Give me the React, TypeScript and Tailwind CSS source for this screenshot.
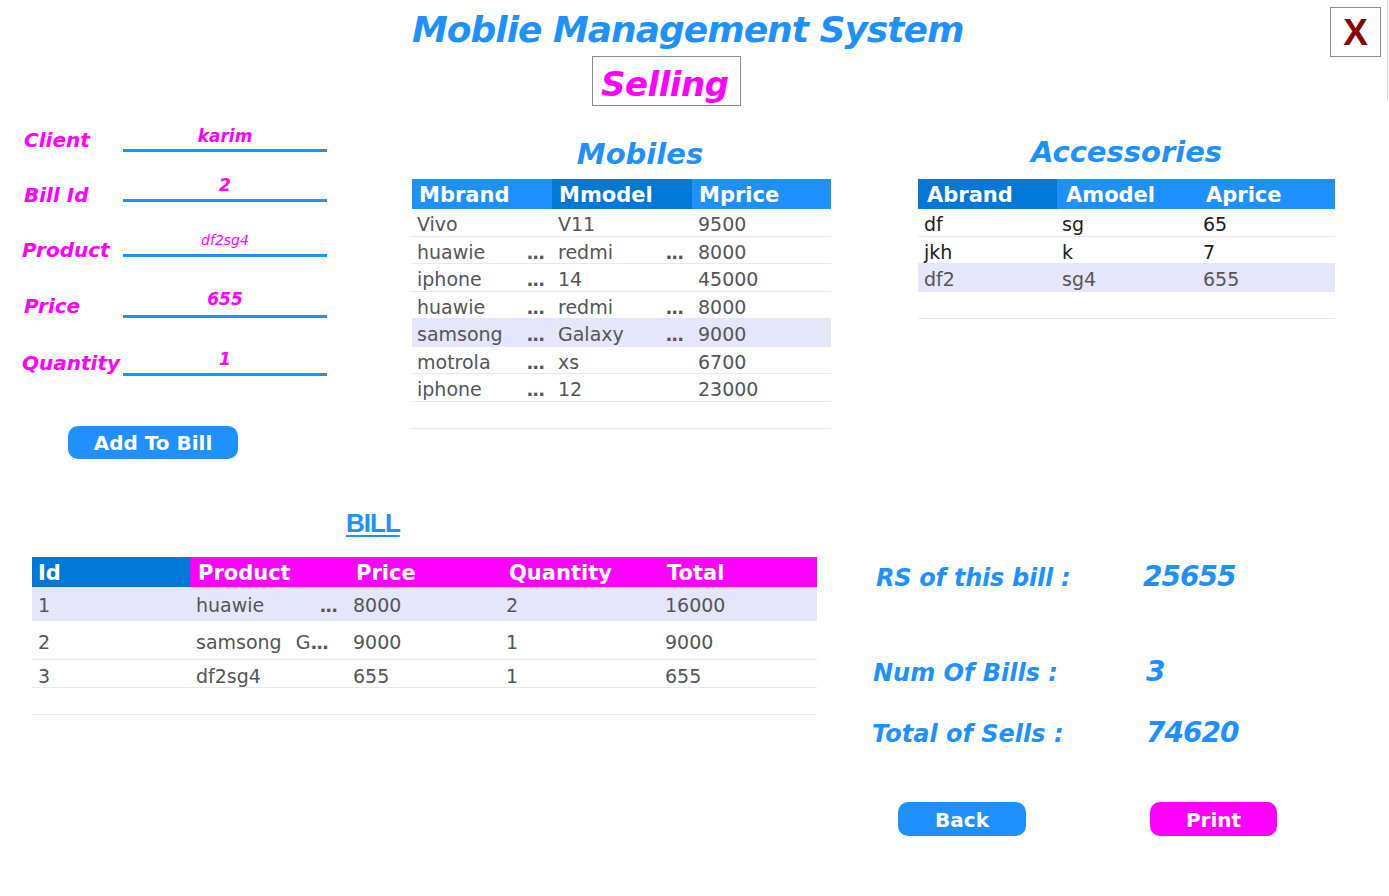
import React from "react";

const fields = [
  { label: "Client", value: "karim", row: "h-[42px]", lab: "pl-[24px] mb-[2px]", val: "text-[17px] font-bold pb-[4px]" },
  { label: "Bill Id", value: "2", row: "h-[50px]", lab: "pl-[24px] mb-[-3px]", val: "text-[17px] font-bold pb-[5px]" },
  { label: "Product", value: "df2sg4", row: "h-[55px]", lab: "pl-[22px] mb-[-3px]", val: "text-[14px] font-normal pb-[7px]" },
  { label: "Price", value: "655", row: "h-[61px]", lab: "pl-[24px] mb-[2px]", val: "text-[17px] font-bold pb-[7px]" },
  { label: "Quantity", value: "1", row: "h-[58px]", lab: "pl-[22px] mb-[3px]", val: "text-[17px] font-bold pb-[5px]" },
];

const mobiles: { b: string; bd: boolean; m: string; md: boolean; p: string; sel?: boolean }[] = [
  { b: "Vivo", bd: false, m: "V11", md: false, p: "9500" },
  { b: "huawie", bd: true, m: "redmi", md: true, p: "8000" },
  { b: "iphone", bd: true, m: "14", md: false, p: "45000" },
  { b: "huawie", bd: true, m: "redmi", md: true, p: "8000" },
  { b: "samsong", bd: true, m: "Galaxy", md: true, p: "9000", sel: true },
  { b: "motrola", bd: true, m: "xs", md: false, p: "6700" },
  { b: "iphone", bd: true, m: "12", md: false, p: "23000" },
];

const accessories = [
  { b: "df", m: "sg", p: "65", sel: false },
  { b: "jkh", m: "k", p: "7", sel: false },
  { b: "df2", m: "sg4", p: "655", sel: true },
];

function Dots() {
  return <span className="text-[18px] leading-none tracking-[-1px] font-bold">...</span>;
}

function Header() {
  return (
    <div className="flex h-[110px]">
      <div className="flex flex-col ml-[412px]">
        <h1 className="mt-[12px] text-[36px] leading-none font-bold italic tracking-[-1px] text-[#1E90FF] whitespace-nowrap">
          Moblie Management System
        </h1>
        <div className="mt-[8px] ml-[180px] w-[149px] h-[50px] border border-[#8a8a8a] pl-[8px] pt-[10px]">
          <span className="block text-[34px] leading-none font-bold italic text-[#FF00FF] tracking-[-0.5px]">Selling</span>
        </div>
      </div>
      <div className="ml-auto mt-[7px] w-[51px] h-[50px] border border-[#8a8a8a] flex items-center justify-center font-['Liberation_Sans',Arial,sans-serif] font-bold text-[37px] leading-none text-[#8B0000]">
        X
      </div>
      <div className="ml-[6px] mr-[1px] w-px h-[100px] bg-[#d4d4d4]" />
    </div>
  );
}

function Form() {
  return (
    <div className="w-[412px] shrink-0 flex flex-col">
      {fields.map((f) => (
        <div key={f.label} className={`flex items-end ${f.row}`}>
          <div className={`w-[123px] shrink-0 whitespace-nowrap text-[20px] leading-none font-bold italic text-[#FF00FF] ${f.lab}`}>
            {f.label}
          </div>
          <div className={`w-[204px] border-b-[3px] border-[#1E90FF] text-center leading-none italic text-[#FF00FF] ${f.val}`}>
            {f.value}
          </div>
        </div>
      ))}
      <div className="mt-[50px] ml-[68px] w-[170px] h-[33px] rounded-[10px] bg-[#1E90FF] text-white font-bold text-[20px] leading-none flex items-center justify-center pt-[1px]">
        Add To Bill
      </div>
    </div>
  );
}

function Mobiles() {
  return (
    <div className="w-[419px] shrink-0 flex flex-col">
      <div className="mt-[30px] pl-[37px] text-center text-[29px] leading-none font-bold italic text-[#1E90FF]">Mobiles</div>
      <div className="mt-[10px] flex flex-col">
        <div className="flex h-[30px] text-white font-bold text-[21px] leading-none">
          <div className="w-[140px] bg-[#1E90FF] pl-[7px] pt-[6px]">Mbrand</div>
          <div className="w-[140px] bg-[#0078D7] pl-[7px] pt-[6px]">Mmodel</div>
          <div className="w-[139px] bg-[#1E90FF] pl-[7px] pt-[6px]">Mprice</div>
        </div>
        {mobiles.map((r, i) => (
          <div
            key={i}
            className={`flex h-[27.5px] border-b border-[#e6e6f5] text-[19px] leading-none text-[#555] ${r.sel ? "bg-[#E6E6FA]" : "bg-white"}`}
          >
            <div className="w-[140px] pl-[5px] pr-[8px] pt-[6px] flex items-baseline justify-between">
              <span>{r.b}</span>
              {r.bd ? <Dots /> : null}
            </div>
            <div className="w-[140px] pl-[6px] pr-[9px] pt-[6px] flex items-baseline justify-between">
              <span>{r.m}</span>
              {r.md ? <Dots /> : null}
            </div>
            <div className="w-[139px] pl-[6px] pt-[6px]">{r.p}</div>
          </div>
        ))}
        <div className="h-[27.5px] border-b border-[#e6e6f5]" />
      </div>
    </div>
  );
}

function Accessories() {
  return (
    <div className="ml-[87px] w-[417px] shrink-0 flex flex-col">
      <div className="mt-[28px] text-center text-[29px] leading-none font-bold italic text-[#1E90FF]">Accessories</div>
      <div className="mt-[12px] flex flex-col">
        <div className="flex h-[30px] text-white font-bold text-[21px] leading-none">
          <div className="w-[139px] bg-[#0078D7] pl-[9px] pt-[6px]">Abrand</div>
          <div className="w-[139px] bg-[#1E90FF] pl-[9px] pt-[6px]">Amodel</div>
          <div className="w-[139px] bg-[#1E90FF] pl-[10px] pt-[6px]">Aprice</div>
        </div>
        {accessories.map((r, i) => (
          <div
            key={i}
            className={`flex h-[27.5px] border-b border-[#e6e6f5] text-[19px] leading-none ${r.sel ? "bg-[#E6E6FA] text-[#555]" : "bg-white text-[#1c1c1c]"}`}
          >
            <div className="w-[139px] pl-[6px] pt-[6px]">{r.b}</div>
            <div className="w-[139px] pl-[5px] pt-[6px]">{r.m}</div>
            <div className="w-[139px] pl-[7px] pt-[6px]">{r.p}</div>
          </div>
        ))}
        <div className="h-[27.5px] border-b border-[#e6e6f5]" />
      </div>
    </div>
  );
}

function Bill() {
  return (
    <div className="w-[817px] shrink-0 flex flex-col">
      <div className="mt-[40px] ml-[346px] font-['Liberation_Sans',Arial,sans-serif] text-[26px] leading-none font-bold tracking-[-1px] text-[#1E90FF] underline decoration-2 underline-offset-[3px]">
        BILL
      </div>
      <div className="mt-[21px] ml-[32px] w-[785px] flex flex-col">
        <div className="flex h-[30px] text-white font-bold text-[21px] leading-none">
          <div className="w-[158px] bg-[#0078D7] pl-[6px] pt-[6px]">Id</div>
          <div className="w-[157px] bg-[#FF00FF] pl-[8px] pt-[6px]">Product</div>
          <div className="w-[154px] bg-[#FF00FF] pl-[9px] pt-[6px]">Price</div>
          <div className="w-[158px] bg-[#FF00FF] pl-[8px] pt-[6px]">Quantity</div>
          <div className="w-[158px] bg-[#FF00FF] pl-[8px] pt-[6px]">Total</div>
        </div>
        <div className="flex h-[34px] bg-[#E6E6FA] border-b border-[#e6e6f5] text-[19px] leading-none text-[#555]">
          <div className="w-[158px] pl-[6px] pt-[9px]">1</div>
          <div className="w-[157px] pl-[6px] pr-[10px] pt-[9px] flex items-baseline justify-between">
            <span>huawie</span>
            <Dots />
          </div>
          <div className="w-[154px] pl-[6px] pt-[9px]">8000</div>
          <div className="w-[158px] pl-[5px] pt-[9px]">2</div>
          <div className="w-[158px] pl-[6px] pt-[9px]">16000</div>
        </div>
        <div className="flex h-[39px] border-b border-[#e6e6f5] text-[19px] leading-none text-[#555]">
          <div className="w-[158px] pl-[6px] pt-[12px]">2</div>
          <div className="w-[157px] pl-[6px] pt-[12px] flex items-baseline">
            <span>samsong</span>
            <span className="ml-[14px]">G</span>
            <Dots />
          </div>
          <div className="w-[154px] pl-[6px] pt-[12px]">9000</div>
          <div className="w-[158px] pl-[5px] pt-[12px]">1</div>
          <div className="w-[158px] pl-[6px] pt-[12px]">9000</div>
        </div>
        <div className="flex h-[28px] border-b border-[#e6e6f5] text-[19px] leading-none text-[#555]">
          <div className="w-[158px] pl-[6px] pt-[7px]">3</div>
          <div className="w-[157px] pl-[6px] pt-[7px]">df2sg4</div>
          <div className="w-[154px] pl-[6px] pt-[7px]">655</div>
          <div className="w-[158px] pl-[5px] pt-[7px]">1</div>
          <div className="w-[158px] pl-[6px] pt-[7px]">655</div>
        </div>
        <div className="h-[27px] border-b border-[#e6e6f5]" />
      </div>
    </div>
  );
}

function Stats() {
  return (
    <div className="ml-[53px] flex flex-col text-[#1E90FF] font-bold italic">
      <div className="mt-[93px] flex items-baseline whitespace-nowrap">
        <div className="w-[273px] pl-[6px] text-[24px] leading-none tracking-[-0.25px]">RS of this bill :</div>
        <div className="text-[28px] leading-none tracking-[-1px]">25655</div>
      </div>
      <div className="mt-[67px] flex items-baseline whitespace-nowrap">
        <div className="w-[273px] pl-[3px] text-[24px] leading-none">Num Of Bills :</div>
        <div className="ml-[3px] text-[28px] leading-none tracking-[-1px]">3</div>
      </div>
      <div className="mt-[33px] flex items-baseline whitespace-nowrap">
        <div className="w-[273px] pl-[2px] text-[24px] leading-none">Total of Sells :</div>
        <div className="ml-[3px] text-[28px] leading-none tracking-[-1px]">74620</div>
      </div>
      <div className="mt-[55px] flex not-italic">
        <div className="ml-[28px] w-[128px] h-[34px] rounded-[10px] bg-[#1E90FF] text-white text-[20px] leading-none flex items-center justify-center pt-[2px]">
          Back
        </div>
        <div className="ml-[124px] w-[127px] h-[34px] rounded-[10px] bg-[#FF00FF] text-white text-[20px] leading-none flex items-center justify-center pt-[2px]">
          Print
        </div>
      </div>
    </div>
  );
}

export default function App() {
  return (
    <div className="w-[1389px] h-[896px] bg-white overflow-hidden font-['DejaVu_Sans',sans-serif] text-[#555]">
      <Header />
      <div className="flex h-[360px]">
        <Form />
        <Mobiles />
        <Accessories />
      </div>
      <div className="flex">
        <Bill />
        <Stats />
      </div>
    </div>
  );
}
